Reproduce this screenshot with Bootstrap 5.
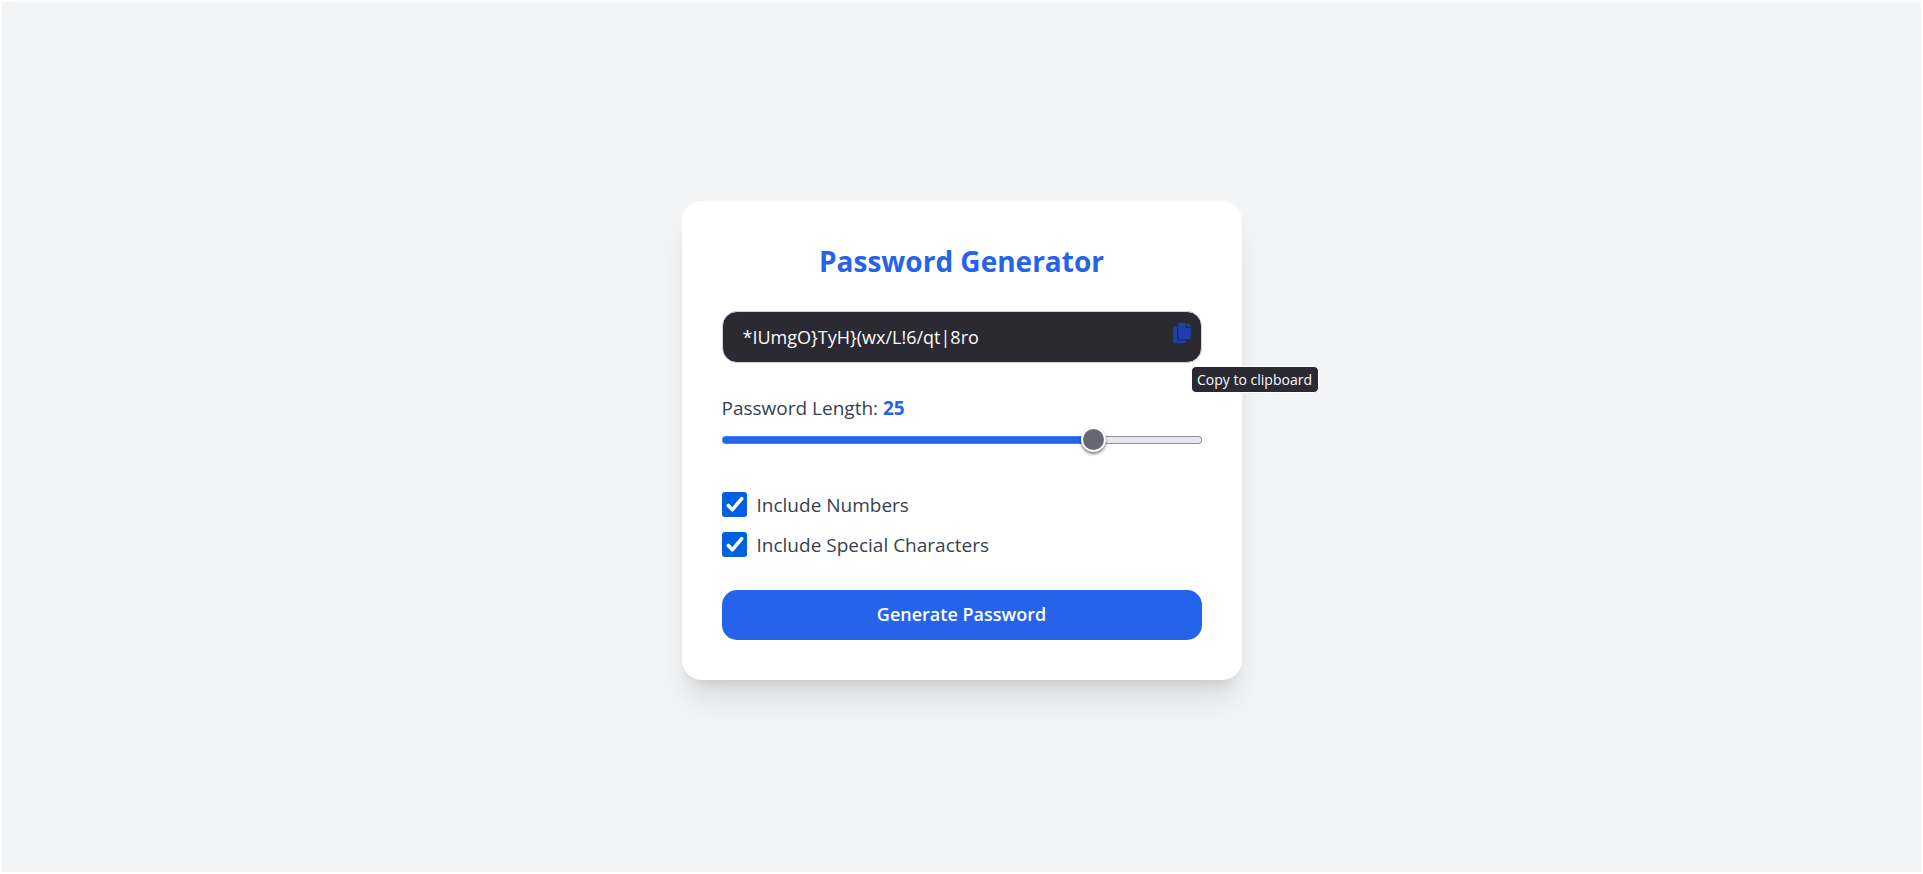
<!DOCTYPE html>
<html lang="en">
<head>
<meta charset="utf-8">
<meta name="viewport" content="width=device-width, initial-scale=1">
<title>Password Generator</title>
<link href="https://cdn.jsdelivr.net/npm/bootstrap@5.3.0/dist/css/bootstrap.min.css" rel="stylesheet">
<style>
  body {
    font-family: "Open Sans", "Noto Sans", sans-serif;
    font-size: 19px;
    line-height: 30px;
    color: #374151;
    background: #f3f4f6;
    border: 2px solid #fff;
    padding-top: 6px;
  }
  .generator {
    max-width: 560px;
    padding: 40px;
    border-radius: 20px;
    box-shadow: 0 25px 31px -6px rgba(0, 0, 0, .1), 0 10px 12px -7px rgba(0, 0, 0, .1);
  }
  .generator h1 {
    font-size: 28px;
    line-height: 40px;
    margin-bottom: 30px;
    color: #2563eb;
  }
  .block-gap { margin-bottom: 30px; }
  .password-field,
  .password-field:focus {
    height: 52px;
    padding: 0 50px 0 20px;
    border: 1px solid #d1d5db;
    border-radius: 15px;
    background: #2b2a33;
    color: #fbfbfe;
    font-size: 18px;
  }
  .copy-btn {
    top: 12px;
    right: 11px;
    line-height: 0;
    color: #1e40af;
  }
  .copy-tip {
    top: 55px;
    left: 469px;
    min-width: 128px;
    height: 27px;
    border: 1px solid #fff;
    border-radius: 5px;
    background: #2b2a33;
    color: #fbfbfe;
    font-size: 14px;
    line-height: 26px;
  }
  .length-value { color: #2563eb; }
  .length-range {
    display: block;
    height: 35px;
    appearance: none;
    background: none;
    margin-bottom: 32px;
  }
  .length-range::-webkit-slider-runnable-track {
    height: 8px;
    border: 1px solid transparent;
    border-radius: 4px;
    background:
      linear-gradient(90deg, #2563eb var(--fill), #e9e9ed var(--fill)) padding-box,
      linear-gradient(90deg, #3b82f6 var(--fill), #8f8f9d var(--fill)) border-box;
  }
  .length-range::-webkit-slider-thumb {
    appearance: none;
    width: 25px;
    height: 25px;
    margin-top: -10px;
    border: 2px solid #fff;
    border-radius: 50%;
    background: #676774;
    box-shadow: 0 2px 3px rgba(0, 0, 0, .5);
  }
  .option { gap: 10px; margin-bottom: 10px; }
  .option .form-check-input {
    width: 25px;
    height: 25px;
    margin: 0;
    border: 0;
    border-radius: 3px;
  }
  .option .form-check-input:checked {
    background-color: #0060df;
    background-image: url("data:image/svg+xml,%3csvg xmlns='http://www.w3.org/2000/svg' viewBox='0 0 25 25'%3e%3cpath fill='none' stroke='%23fff' stroke-width='3.6' stroke-linecap='round' stroke-linejoin='round' d='M6.3 13.5l4 4.3L19.7 6.7'/%3e%3c/svg%3e");
    background-size: 100% 100%;
  }
  .generate-btn {
    height: 50px;
    margin-top: 20px;
    border: 0;
    border-radius: 15px;
    background: #2563eb;
    color: #fff;
    font-size: 18px;
    font-weight: 600;
  }
  .generate-btn:hover { background: #1d4ed8; color: #fff; }
</style>
</head>
<body class="min-vh-100 d-flex align-items-center justify-content-center">
<main class="generator bg-white w-100">
  <h1 class="text-center fw-bold">Password Generator</h1>

  <div class="position-relative block-gap">
    <input type="text" class="form-control password-field" aria-label="Generated password" value="*IUmgO}TyH}(wx/L!6/qt|8ro" readonly>
    <button type="button" class="copy-btn position-absolute bg-transparent border-0 p-0" aria-label="Copy to clipboard">
      <svg width="18" height="20" viewBox="0 0 448 512" fill="currentColor" aria-hidden="true"><path d="M320 448v40c0 13.255-10.745 24-24 24H24c-13.255 0-24-10.745-24-24V120c0-13.255 10.745-24 24-24h72v296c0 30.879 25.121 56 56 56h168zm0-344V0H152c-13.255 0-24 10.745-24 24v368c0 13.255 10.745 24 24 24h272c13.255 0 24-10.745 24-24V128H344c-13.2 0-24-10.8-24-24zm120.971-31.029L375.029 7.029A24 24 0 0 0 358.059 0H352v96h96v-6.059a24 24 0 0 0-7.029-16.97z"/></svg>
    </button>
    <span class="copy-tip position-absolute text-nowrap text-center" role="tooltip">Copy to clipboard</span>
  </div>

  <label for="length" class="d-block">Password Length: <span class="length-value fw-bold">25</span></label>
  <input type="range" id="length" class="length-range w-100 p-0" min="6" max="30" value="25" style="--fill: 78%">

  <div class="option d-flex align-items-center">
    <input type="checkbox" class="form-check-input" id="numbers" checked>
    <label for="numbers">Include Numbers</label>
  </div>
  <div class="option d-flex align-items-center">
    <input type="checkbox" class="form-check-input" id="special" checked>
    <label for="special">Include Special Characters</label>
  </div>

  <button type="button" class="btn generate-btn w-100">Generate Password</button>
</main>
<script src="https://cdn.jsdelivr.net/npm/bootstrap@5.3.0/dist/js/bootstrap.bundle.min.js"></script>
</body>
</html>
